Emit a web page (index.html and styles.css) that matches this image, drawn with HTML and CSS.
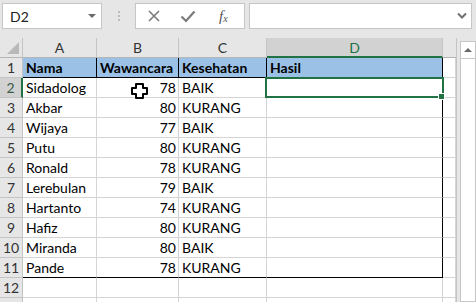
FILE: index.html
```html
<html>
<head>
  <link rel="stylesheet" href="styles.css">
</head>
<body>
  <div class="app">
    <div class="toolbar">
      <div class="namebox">
        <span>D2</span>
        <span class="caret"></span>
      </div>
      <div class="grip"><i></i><i></i><i></i></div>
      <div class="fbuttons">
        <svg class="ico" width="14" height="14" viewBox="0 0 14 14"><path d="M2 2 L12 12 M12 2 L2 12" stroke="#7a7a7a" stroke-width="1.6"/></svg>
        <svg class="ico" width="16" height="14" viewBox="0 0 16 14"><path d="M1.5 7.5 L6 12 L14.5 2.5" fill="none" stroke="#7a7a7a" stroke-width="2.2"/></svg>
        <span class="fx"><i>f</i><sub>x</sub></span>
      </div>
      <div class="formula">
        <svg width="10" height="8" viewBox="0 0 10 8"><path d="M1 1.5 L5 5.5 L9 1.5" fill="none" stroke="#707070" stroke-width="2"/></svg>
      </div>
    </div>

    <div class="area">
      <div class="sheet">
        <div class="hd corner"><span class="tri"></span></div>
        <div class="hd">A</div>
        <div class="hd">B</div>
        <div class="hd">C</div>
        <div class="hd hd-sel">D</div>
        <div class="hd hd-end"></div>

        <div class="rh">1</div>
        <div class="c t1 bold">Nama</div>
        <div class="c t1 bold">Wawancara</div>
        <div class="c t1 bold">Kesehatan</div>
        <div class="c t1 bold last">Hasil</div>
        <div class="c"></div>

        <div class="rh rh-sel">2</div>
        <div class="c">Sidadolog</div>
        <div class="c num">78</div>
        <div class="c">BAIK</div>
        <div class="c last active"></div>
        <div class="c"></div>

        <div class="rh">3</div>
        <div class="c">Akbar</div>
        <div class="c num">80</div>
        <div class="c">KURANG</div>
        <div class="c last"></div>
        <div class="c"></div>

        <div class="rh">4</div>
        <div class="c">Wijaya</div>
        <div class="c num">77</div>
        <div class="c">BAIK</div>
        <div class="c last"></div>
        <div class="c"></div>

        <div class="rh">5</div>
        <div class="c">Putu</div>
        <div class="c num">80</div>
        <div class="c">KURANG</div>
        <div class="c last"></div>
        <div class="c"></div>

        <div class="rh">6</div>
        <div class="c">Ronald</div>
        <div class="c num">78</div>
        <div class="c">KURANG</div>
        <div class="c last"></div>
        <div class="c"></div>

        <div class="rh">7</div>
        <div class="c">Lerebulan</div>
        <div class="c num">79</div>
        <div class="c">BAIK</div>
        <div class="c last"></div>
        <div class="c"></div>

        <div class="rh">8</div>
        <div class="c">Hartanto</div>
        <div class="c num">74</div>
        <div class="c">KURANG</div>
        <div class="c last"></div>
        <div class="c"></div>

        <div class="rh">9</div>
        <div class="c">Hafiz</div>
        <div class="c num">80</div>
        <div class="c">KURANG</div>
        <div class="c last"></div>
        <div class="c"></div>

        <div class="rh">10</div>
        <div class="c">Miranda</div>
        <div class="c num">80</div>
        <div class="c">BAIK</div>
        <div class="c last"></div>
        <div class="c"></div>

        <div class="rh">11</div>
        <div class="c bot">Pande</div>
        <div class="c num bot">78</div>
        <div class="c bot">KURANG</div>
        <div class="c last bot"></div>
        <div class="c"></div>

        <div class="rh">12</div>
        <div class="c"></div>
        <div class="c"></div>
        <div class="c"></div>
        <div class="c"></div>
        <div class="c"></div>

        <div class="rh"></div>
        <div class="c"></div>
        <div class="c"></div>
        <div class="c"></div>
        <div class="c"></div>
        <div class="c"></div>

        <svg class="cursor" width="17" height="16" viewBox="0 0 17 16">
          <path d="M5 1 H12 V5 H16 V11 H12 V15 H5 V11 H1 V5 H5 Z" fill="#fff" stroke="#000" stroke-width="2" stroke-linejoin="round"/>
        </svg>
      </div>
      <div class="gap"></div>
      <div class="vscroll">
        <div class="up"><span></span></div>
        <div class="track"></div>
      </div>
    </div>
  </div>
</body>
</html>
```

FILE: styles.css
```css
body {
  margin: 0;
  background: #e6e6e6;
  font-family: Lato, "Open Sans", sans-serif;
  overflow: hidden;
}

.app {
  width: 476px;
  height: 302px;
  display: flex;
  flex-direction: column;
}

/* formula bar */
.toolbar {
  height: 38px;
  display: flex;
  align-items: flex-start;
  padding: 3px 4px 0 2px;
  box-sizing: border-box;
}

.namebox {
  width: 100px;
  height: 26px;
  box-sizing: border-box;
  background: #fff;
  border: 1px solid #c6c6c6;
  display: flex;
  align-items: center;
  justify-content: space-between;
  padding: 0 5px 0 7px;
  font-size: 14px;
  color: #222;
}

.caret {
  width: 0;
  height: 0;
  border-left: 4px solid transparent;
  border-right: 4px solid transparent;
  border-top: 4px solid #6a6a6a;
}

.grip {
  width: 33px;
  height: 26px;
  display: flex;
  flex-direction: column;
  align-items: center;
  justify-content: center;
  gap: 2px;
}

.grip i {
  width: 2px;
  height: 2px;
  background: #bdbdbd;
}

.fbuttons {
  width: 110px;
  height: 26px;
  box-sizing: border-box;
  background: #fff;
  border: 1px solid #c6c6c6;
  display: flex;
  align-items: center;
  padding-left: 11px;
  gap: 19px;
}

.fx {
  font-family: "Liberation Serif", serif;
  font-size: 15px;
  color: #555;
  margin-left: 4px;
}

.fx sub {
  font-size: 10px;
  font-style: italic;
  vertical-align: -1px;
}

.formula {
  margin-left: 4px;
  flex: 1;
  height: 26px;
  box-sizing: border-box;
  background: #fff;
  border: 1px solid #c6c6c6;
  display: flex;
  align-items: center;
  justify-content: flex-end;
  padding-right: 4px;
}

/* sheet */
.area {
  flex: 1;
  display: flex;
  overflow: hidden;
}

.sheet {
  position: relative;
  display: grid;
  grid-template-columns: 23px 74px 82px 88px 176px 13px;
  grid-template-rows: 20px repeat(13, 20px);
  background: #fff;
  font-size: 14px;
  color: #000;
}

.hd {
  background: #e6e6e6;
  border-right: 1px solid #c4c4c4;
  border-bottom: 1px solid #b5b5b5;
  color: #333;
  font-size: 14px;
  display: flex;
  align-items: center;
  justify-content: center;
}

.corner {
  position: relative;
}

.tri {
  position: absolute;
  right: 3px;
  bottom: 3px;
  width: 0;
  height: 0;
  border-left: 12px solid transparent;
  border-bottom: 12px solid #b9b9b9;
}

.hd-sel {
  background: #d2d2d2;
  color: #217346;
  border-bottom: 2px solid #217346;
}

.hd-end {
  border-right: none;
}

.rh {
  background: #e6e6e6;
  border-right: 1px solid #c4c4c4;
  border-bottom: 1px solid #c4c4c4;
  color: #333;
  font-size: 14px;
  display: flex;
  align-items: center;
  justify-content: center;
}

.rh-sel {
  background: #d2d2d2;
  color: #3c5a48;
  border-right: 2px solid #217346;
}

.c {
  border-right: 1px solid #d4d4d4;
  border-bottom: 1px solid #d4d4d4;
  display: flex;
  align-items: center;
  padding: 0 2px 0 3px;
  white-space: nowrap;
}

.num {
  justify-content: flex-end;
}

.t1 {
  background: #9bc2e6;
  border-right: 1px solid #000;
  border-bottom: 1px solid #000;
}

.bold {
  font-weight: bold;
}

.last {
  border-right: 1px solid #000;
}

.bot {
  border-bottom: 1px solid #000;
}

.active {
  position: relative;
}

.active::before {
  content: "";
  position: absolute;
  left: -2px;
  top: -1px;
  right: -2px;
  bottom: -1px;
  border: 2px solid #217346;
}

.active::after {
  content: "";
  position: absolute;
  right: -3px;
  bottom: -3px;
  width: 5px;
  height: 5px;
  background: #217346;
  border: 1px solid #fff;
}

.cursor {
  position: absolute;
  left: 131px;
  top: 45px;
}

.gap {
  width: 3px;
  background: #e6e6e6;
  border-left: 1px solid #c4c4c4;
}

.vscroll {
  flex: 1;
  display: flex;
  flex-direction: column;
  padding-top: 3px;
}

.up {
  height: 16px;
  background: #fff;
  border: 1px solid #c6c6c6;
  display: flex;
  align-items: center;
  justify-content: center;
}

.up span {
  width: 0;
  height: 0;
  border-left: 4px solid transparent;
  border-right: 4px solid transparent;
  border-bottom: 4px solid #6a6a6a;
}

.track {
  flex: 1;
  background: #fff;
  border: 1px solid #c6c6c6;
  border-top: none;
}
```
